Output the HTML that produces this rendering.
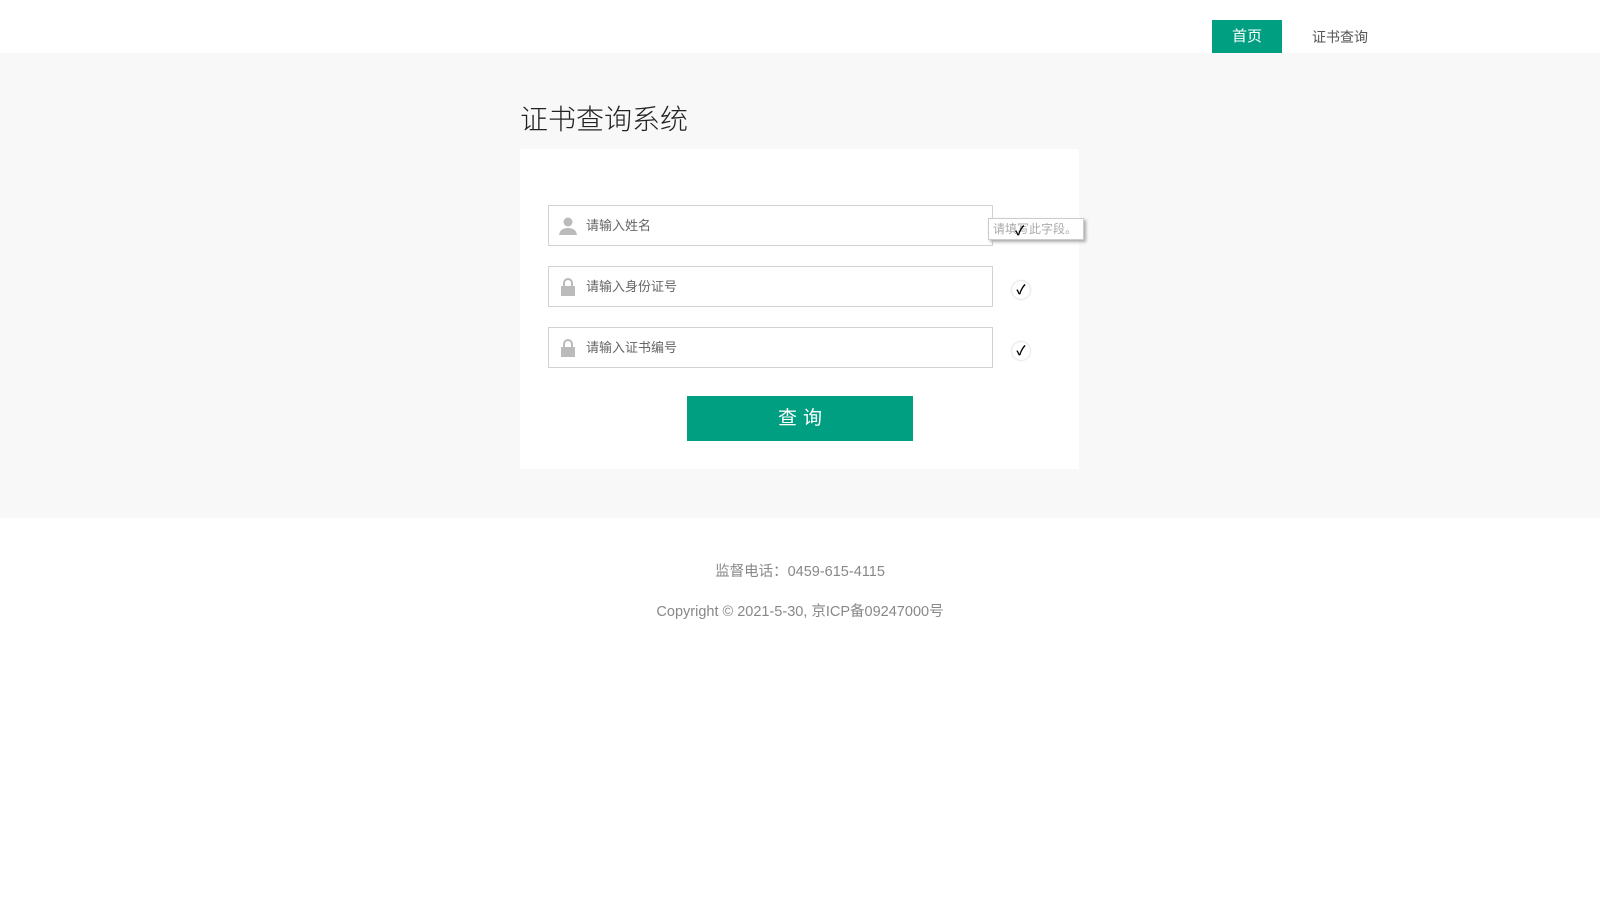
<!DOCTYPE html>
<html><head><meta charset="utf-8"><style>
*{margin:0;padding:0;box-sizing:border-box}
body{width:1600px;height:900px;background:#fff;font-family:"Liberation Sans","Noto Sans CJK SC",sans-serif;position:relative;overflow:hidden}
.abs{position:absolute}
.hdr{left:0;top:0;width:1600px;height:53px;background:#fff}
.nav1{left:1212px;top:20px;width:70px;height:33px;background:#009f82;color:#fff;font-size:15px;line-height:33px;text-align:center}
.nav2{left:1312px;top:21px;height:33px;color:#555;font-size:14px;line-height:33px}
.gray{left:0;top:53px;width:1600px;height:465px;background:#f8f8f8}
.title{left:520px;top:102px;font-size:28px;color:#222;line-height:36px;font-weight:300}
.card{left:520px;top:149px;width:559px;height:320px;background:#fff}
.inp{left:548px;width:445px;height:41px;border:1px solid #d2d2d2;background:#fff}
.inp span{position:absolute;left:37px;top:0;line-height:39px;font-size:13px;color:#666}
.inp svg{position:absolute;left:9px;top:10px}
.chk{width:18px;height:18px;border-radius:50%;background:#fff;box-shadow:0 0 2px #bbb;font-size:13px;line-height:18px;text-align:center;color:#000;font-weight:bold}
.btn{left:687px;top:396px;width:226px;height:45px;background:#009f82;color:#fff;font-size:19px;text-align:center;line-height:45px;letter-spacing:6px;text-indent:6px}
.tip{left:988px;top:218px;width:96px;height:22px;border:1px solid #ccc;background:#fff;box-shadow:2px 2px 3px #aaa;font-size:12px;color:#aaa;line-height:20px;padding-left:4px}
.f{left:0;width:1600px;text-align:center;color:#888;font-size:14.5px}
</style></head><body>
<div class="abs hdr"></div>
<div class="abs nav1">首页</div>
<div class="abs nav2">证书查询</div>
<div class="abs gray"></div>
<div class="abs title">证书查询系统</div>
<div class="abs card"></div>
<div class="abs inp" style="top:205px"><svg width="20" height="20" viewBox="0 0 20 20"><circle cx="10" cy="6" r="4.5" fill="#bbb"/><path d="M1 19 Q2 12 10 12 Q18 12 19 19Z" fill="#bbb"/></svg><span>请输入姓名</span></div>
<div class="abs inp" style="top:266px"><svg width="20" height="20" viewBox="0 0 20 20"><path d="M5 9V6a5 5 0 0 1 10 0v3h-2V6a3 3 0 0 0-6 0v3z" fill="#bbb"/><rect x="3" y="9" width="14" height="10" fill="#bbb"/></svg><span>请输入身份证号</span></div>
<div class="abs inp" style="top:327px"><svg width="20" height="20" viewBox="0 0 20 20"><path d="M5 9V6a5 5 0 0 1 10 0v3h-2V6a3 3 0 0 0-6 0v3z" fill="#bbb"/><rect x="3" y="9" width="14" height="10" fill="#bbb"/></svg><span>请输入证书编号</span></div>
<div class="abs chk" style="left:1012px;top:281px">✓</div>
<div class="abs chk" style="left:1012px;top:342px">✓</div>
<div class="abs tip">请填写此字段。</div>
<div class="abs" style="left:1015px;top:220px;font-size:13px;font-weight:bold">✓</div>
<div class="abs btn">查询</div>
<div class="abs f" style="top:560px">监督电话：0459-615-4115</div>
<div class="abs f" style="top:600px">Copyright © 2021-5-30, 京ICP备09247000号</div>
</body></html>
